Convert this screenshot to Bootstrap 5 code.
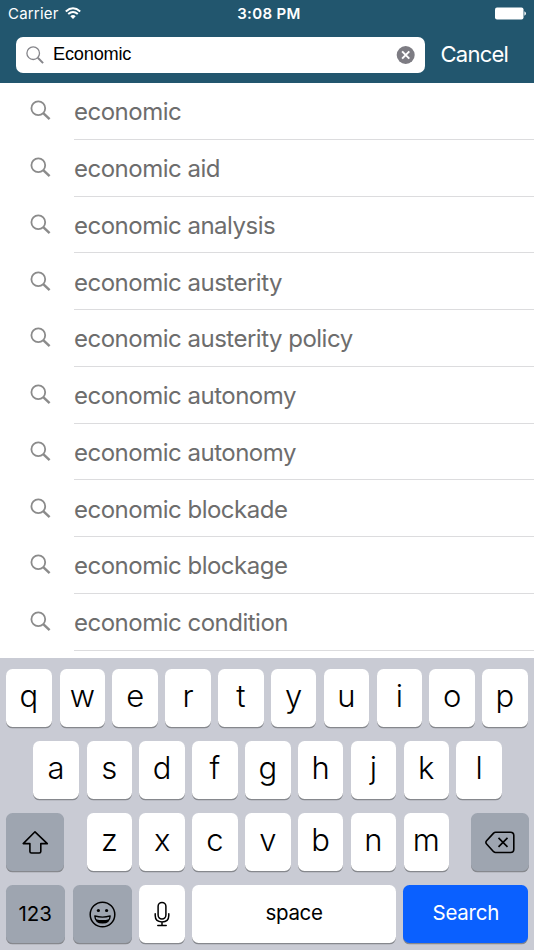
<!DOCTYPE html>
<html lang="en">
<head>
<meta charset="utf-8">
<meta name="viewport" content="width=device-width, initial-scale=1">
<title>Search</title>
<link href="https://cdn.jsdelivr.net/npm/bootstrap@5.3.0/dist/css/bootstrap.min.css" rel="stylesheet">
<style>
body{font-family:Inter,"Liberation Sans",sans-serif;width:534px;height:950px;background:#fff}
svg{display:block;flex:none}
.top-area{background:#22566e;height:83px;color:#fff}
.status-bar{height:27px;font-size:15px;padding:0 8px}
.status-bar>div{flex:1 1 0}
.carrier{letter-spacing:.2px;padding-top:1px}
.wifi{margin-left:6px}
.clock{font-weight:600;font-size:15px;letter-spacing:.35px;padding:1px 0 0 4px}
.search-line{padding:10px 0 0 16px}
.search-field{width:409px;height:36px;border-radius:7px;padding:0 10px}
.query{font-family:"Liberation Sans",sans-serif;font-size:18.2px;letter-spacing:-.2px;color:#000;margin-left:9px}
.cancel{font-size:22px;margin:-2px 0 0 15.5px;letter-spacing:-.75px}
.results{height:575px}
.result{height:56.75px;flex:none;padding-left:30.5px;color:#8b8b8b}
.result svg{margin:-1px 0 0 -.5px}
.result-text{margin-left:23px;border-bottom:1px solid #dcdcde;color:#6d6d6d;font-size:24px;letter-spacing:-.5px;padding-top:3px}
.keyboard{background:#c9cbd4;height:292px;padding:10.5px 5.6px 0;gap:14.2px}
.key-row{gap:7.4px}
.key{height:58px;width:45.45px;flex:none;background:#fff;border-radius:6.5px;box-shadow:0 1.3px 0 #86888d;color:#000;font-size:31px;font-weight:300;line-height:53px;text-align:center}
.key.first{width:46.6px}
.key.tool{background:#9ea5b0}
.key.label{font-size:20.5px;font-weight:400;line-height:55px;letter-spacing:-.35px}
.home-row{padding-left:27px}
.shift,.erase{width:58px;padding-top:1px}
.shift{margin-right:15.6px}
.erase{margin-left:14.2px}
.key.numbers{width:59.2px;line-height:58px;letter-spacing:-.1px}
.emoji{width:58.8px;margin-left:.9px}
.space{width:204px}
.key.submit{width:124.7px;background:#0a60ff;color:#fff;letter-spacing:-.25px}
</style>
<script src="https://cdn.jsdelivr.net/npm/bootstrap@5.3.0/dist/js/bootstrap.bundle.min.js"></script>
</head>
<body class="m-0 overflow-hidden d-flex flex-column">
<svg width="0" height="0" class="position-absolute"><symbol id="lens" viewBox="0 0 21 21"><circle cx="8.3" cy="8.3" r="6.9" fill="none" stroke="currentColor" stroke-width="1.8"/><path d="M13.2 13.2 19.6 19.2" fill="none" stroke="currentColor" stroke-width="2.5"/></symbol></svg>
<header class="top-area">
  <div class="status-bar d-flex align-items-center">
    <div class="d-flex align-items-center"><span class="carrier">Carrier</span>
      <svg class="wifi" width="16" height="13" viewBox="0 0 16 13" fill="none" stroke="#fff" stroke-width="2"><path d="M.8 4.4Q8-2 15.2 4.4M3.2 7.1Q8 3 12.8 7.1"/><path d="M5.3 9.2Q8 7 10.7 9.2L8 12Z" fill="#fff" stroke="none"/></svg>
    </div>
    <div class="clock text-center text-nowrap">3:08 PM</div>
    <div class="d-flex justify-content-end"><svg width="32" height="13" viewBox="0 0 32 13" fill="#fff"><rect x="1" y=".5" width="28.5" height="12" rx="2"/><path d="M30.4 4.3Q32 5 32 6.5T30.4 8.7Z"/></svg></div>
  </div>
  <div class="search-line d-flex align-items-center">
    <div class="search-field bg-white d-flex align-items-center">
      <svg width="18" height="18" viewBox="0 0 18 18" fill="none" stroke="#85858a"><circle cx="7.2" cy="7.2" r="6.3" stroke-width="1.3"/><path d="m11.8 11.8 5.3 5.3" stroke-width="2"/></svg>
      <span class="query">Economic</span>
      <svg class="ms-auto" width="19" height="19" viewBox="0 0 19 19"><circle cx="9.7" cy="9" r="9" fill="#7d7c83"/><path d="m6.1 5.4 7.2 7.2m0-7.2-7.2 7.2" stroke="#fff" stroke-width="2"/></svg>
    </div>
    <span class="cancel">Cancel</span>
  </div>
</header>
<main class="results overflow-hidden d-flex flex-column">
  <div class="result d-flex align-items-center"><svg width="21" height="21"><use href="#lens"/></svg><div class="result-text h-100 flex-grow-1 d-flex align-items-center">economic</div></div>
  <div class="result d-flex align-items-center"><svg width="21" height="21"><use href="#lens"/></svg><div class="result-text h-100 flex-grow-1 d-flex align-items-center">economic aid</div></div>
  <div class="result d-flex align-items-center"><svg width="21" height="21"><use href="#lens"/></svg><div class="result-text h-100 flex-grow-1 d-flex align-items-center">economic analysis</div></div>
  <div class="result d-flex align-items-center"><svg width="21" height="21"><use href="#lens"/></svg><div class="result-text h-100 flex-grow-1 d-flex align-items-center">economic austerity</div></div>
  <div class="result d-flex align-items-center"><svg width="21" height="21"><use href="#lens"/></svg><div class="result-text h-100 flex-grow-1 d-flex align-items-center">economic austerity policy</div></div>
  <div class="result d-flex align-items-center"><svg width="21" height="21"><use href="#lens"/></svg><div class="result-text h-100 flex-grow-1 d-flex align-items-center">economic autonomy</div></div>
  <div class="result d-flex align-items-center"><svg width="21" height="21"><use href="#lens"/></svg><div class="result-text h-100 flex-grow-1 d-flex align-items-center">economic autonomy</div></div>
  <div class="result d-flex align-items-center"><svg width="21" height="21"><use href="#lens"/></svg><div class="result-text h-100 flex-grow-1 d-flex align-items-center">economic blockade</div></div>
  <div class="result d-flex align-items-center"><svg width="21" height="21"><use href="#lens"/></svg><div class="result-text h-100 flex-grow-1 d-flex align-items-center">economic blockage</div></div>
  <div class="result d-flex align-items-center"><svg width="21" height="21"><use href="#lens"/></svg><div class="result-text h-100 flex-grow-1 d-flex align-items-center">economic condition</div></div>
</main>
<section class="keyboard d-flex flex-column">
  <div class="key-row d-flex">
    <div class="key first">q</div><div class="key">w</div><div class="key">e</div><div class="key">r</div><div class="key">t</div><div class="key">y</div><div class="key">u</div><div class="key">i</div><div class="key">o</div><div class="key">p</div>
  </div>
  <div class="key-row home-row d-flex">
    <div class="key first">a</div><div class="key">s</div><div class="key">d</div><div class="key">f</div><div class="key">g</div><div class="key">h</div><div class="key">j</div><div class="key">k</div><div class="key">l</div>
  </div>
  <div class="key-row d-flex">
    <div class="key tool shift d-flex align-items-center justify-content-center"><svg width="28" height="24" viewBox="0 0 28 24" fill="none" stroke="#000" stroke-width="1.6" stroke-linejoin="round"><path d="M14 1.8 26.3 13.6H19.8V21.4Q19.8 23 18.2 23H10.5Q8.9 23 8.9 21.4V13.6H2.2Z"/></svg></div>
    <div class="key">z</div><div class="key">x</div><div class="key">c</div><div class="key">v</div><div class="key">b</div><div class="key">n</div><div class="key">m</div>
    <div class="key tool erase d-flex align-items-center justify-content-center"><svg width="30" height="23" viewBox="0 0 30 23" fill="none" stroke="#000" stroke-width="1.6" stroke-linejoin="round"><path d="M10.5 1.3H25.5Q28.8 1.3 28.8 4.6V18.2Q28.8 21.5 25.5 21.5H10.5Q9.5 21.5 8.6 20.7L1.6 13Q.2 11.4 1.6 9.8L8.6 2.1Q9.5 1.3 10.5 1.3Z"/><path d="m13.5 6.9 9 9m0-9-9 9"/></svg></div>
  </div>
  <div class="key-row d-flex">
    <div class="key tool label numbers">123</div>
    <div class="key tool emoji d-flex align-items-center justify-content-center"><svg width="27" height="27" viewBox="0 0 27 27"><circle cx="13.5" cy="13.5" r="12.3" fill="none" stroke="#000" stroke-width="1.5"/><circle cx="9.4" cy="9.5" r="1.6"/><circle cx="17.6" cy="9.5" r="1.6"/><path d="M5.8 14.9Q13.5 17.2 21.2 14.9Q20.7 21.9 13.5 21.9T5.8 14.9Z" fill="none" stroke="#000" stroke-width="1.3" stroke-linejoin="round"/><path d="M6.9 18.2Q13.5 20 20.1 18.2Q18.5 22 13.5 22T6.9 18.2Z"/></svg></div>
    <div class="key d-flex align-items-center justify-content-center"><svg width="16" height="26" viewBox="0 0 16 26" fill="none" stroke="#000" stroke-width="1.5" stroke-linecap="round"><rect x="4.1" y="1.4" width="7.8" height="16.6" rx="3.9"/><path d="M1.2 12.8V14.6Q1.2 20.9 8 20.9T14.8 14.6V12.8M8 20.9V24.5M3.8 24.6H12.2"/></svg></div>
    <div class="key label space">space</div>
    <div class="key label submit">Search</div>
  </div>
</section>
</body>
</html>
